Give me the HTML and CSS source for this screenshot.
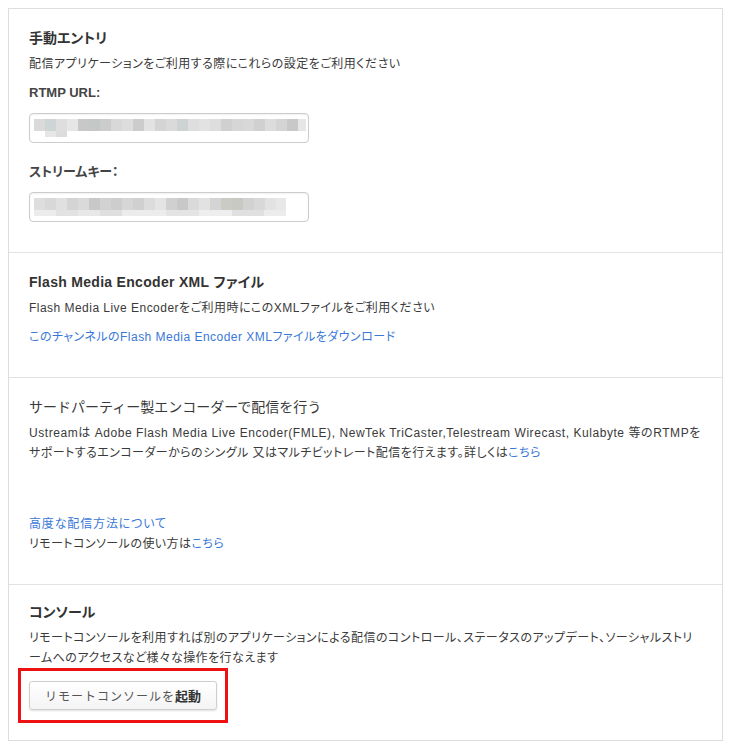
FILE: index.html
```html
<!DOCTYPE html>
<html lang="ja">
<head>
<meta charset="utf-8">
<title>配信設定</title>
<link rel="stylesheet" href="styles.css">
</head>
<body>
<div class="card">
  <section class="sec">
    <h2 class="title">手動エントリ</h2>
    <p class="desc">配信アプリケーションをご利用する際にこれらの設定をご利用ください</p>
    <div class="label">RTMP URL:</div>
    <div class="field"><div class="mosaic mosaic-url"></div></div>
    <div class="label">ストリームキー：</div>
    <div class="field field-last"><div class="mosaic mosaic-key"></div></div>
  </section>
  <section class="sec">
    <h2 class="title title-wide">Flash Media Encoder XML ファイル</h2>
    <p class="desc">Flash Media Live Encoderをご利用時にこのXMLファイルをご利用ください</p>
    <p class="desc desc-link"><a class="link" href="#">このチャンネルのFlash Media Encoder XMLファイルをダウンロード</a></p>
  </section>
  <section class="sec">
    <h2 class="title title-light">サードパーティー製エンコーダーで配信を行う</h2>
    <p class="desc lines loose"><span class="line-wide">Ustreamは Adobe Flash Media Live Encoder(FMLE), NewTek TriCaster,Telestream Wirecast, Kulabyte 等のRTMPを</span><br>サポートするエンコーダーからのシングル 又はマルチビットレート配信を行えます。詳しくは<a class="link" href="#">こちら</a></p>
    <p class="desc lines loose more"><a class="link link-wide" href="#">高度な配信方法について</a><br>リモートコンソールの使い方は<a class="link" href="#">こちら</a></p>
  </section>
  <section class="sec sec-last">
    <h2 class="title">コンソール</h2>
    <p class="desc lines">リモートコンソールを利用すれば別のアプリケーションによる配信のコントロール、ステータスのアップデート、ソーシャルストリ<br>ームへのアクセスなど様々な操作を行なえます</p>
    <div class="highlight">
      <button class="btn" type="button">リモートコンソールを<b class="btn-strong">起動</b></button>
    </div>
  </section>
</div>
</body>
</html>
```
FILE: styles.css
```css
html, body {
  background: #ffffff;
}
body {
  margin: 8px 7px 8px 8px;
  font-family: "Liberation Sans", "Noto Sans CJK JP", sans-serif;
  color: #333333;
  font-size: 12px;
}
.card {
  border: 1px solid #dddddd;
}
.sec {
  padding: 20px 21px 30px 20px;
  border-bottom: 1px solid #e2e2e2;
}
.sec-last {
  border-bottom: none;
  padding-top: 18px;
  padding-bottom: 17px;
}
.title {
  margin: 0 0 7px 0;
  font-size: 14px;
  line-height: 18px;
  font-weight: bold;
  color: #333333;
  font-feature-settings: "palt";
}
.title-wide {
  letter-spacing: 0.3px;
}
.title-light {
  font-weight: normal;
  font-size: 14px;
  font-feature-settings: normal;
  color: #3a3a3a;
}
.desc {
  margin: 0;
  font-size: 12px;
  line-height: 20px;
  color: #3a3a3a;
  font-feature-settings: "palt";
  letter-spacing: 0.47px;
}
.desc-link {
  margin-top: 9px;
}
.lines {
  white-space: nowrap;
}
.loose {
  letter-spacing: 0.45px;
}
.line-wide {
  letter-spacing: 0.56px;
}
.link-wide {
  letter-spacing: 0.85px;
}
.more {
  margin-top: 51px;
}
.link {
  color: #3a78d8;
  text-decoration: none;
}
.label {
  margin: 9px 0 10px 0;
  font-size: 13px;
  line-height: 20px;
  font-weight: bold;
  color: #444444;
  font-feature-settings: "palt";
}
.field {
  box-sizing: border-box;
  width: 280px;
  height: 30px;
  border: 1px solid #cccccc;
  border-radius: 4px;
  box-shadow: inset 0 1px 2px rgba(0, 0, 0, 0.06);
  margin-bottom: 19px;
  display: flex;
  align-items: center;
  padding-left: 4px;
}
.field-last {
  margin-bottom: 0;
}
.mosaic {
  height: 18px;
}
.mosaic-url {
  width: 272px;
  background:
    linear-gradient(90deg,
      transparent 0 11px, #e6e6e6 11px 22px, #dcdcdc 22px 33px, transparent 33px 100%) 0 12px / 272px 6px no-repeat,
    linear-gradient(90deg,
      #dadada 0 11px, #cfd4d4 11px 22px, #dedede 22px 33px, #e6e6e6 33px 44px,
      #c8c8c8 44px 55px, #c4c8c8 55px 66px, #cccccc 66px 77px, #d8d8d8 77px 88px,
      #dddddd 88px 99px, #cccccc 99px 110px, #e2e2e2 110px 121px, #d4d4d4 121px 132px,
      #dadada 132px 143px, #cdd3d3 143px 154px, #dedede 154px 165px, #e2e2e2 165px 176px,
      #dddddd 176px 187px, #d0d0d0 187px 198px, #d6d6d6 198px 209px, #d8d8d8 209px 220px,
      #d0d0d0 220px 231px, #dcdcdc 231px 242px, #d4d4d4 242px 253px, #c8c8c8 253px 264px,
      #e6e6e6 264px 272px) 0 0 / 272px 12px no-repeat;
}
.mosaic-key {
  width: 252px;
  background:
    linear-gradient(90deg,
      #ececec 0 22px, #e2e2e2 22px 44px, #e8e8e8 44px 66px, #dfdfdf 66px 88px,
      #ececec 88px 132px, #e4e4e4 132px 165px, #eeeeee 165px 198px, #e0e0e0 198px 230px, #ececec 230px 252px) 0 12px / 252px 6px no-repeat,
    linear-gradient(90deg,
      #dedede 0 11px, #d8d8d8 11px 22px, #e0e0e0 22px 33px, #d4d4d4 33px 44px,
      #dadada 44px 55px, #c8c8c8 55px 66px, #d2d2d2 66px 77px, #cdcdcd 77px 88px,
      #d6d6d6 88px 99px, #d0d0d0 99px 110px, #dcdcdc 110px 121px, #e4e4e4 121px 132px,
      #d0d0d0 132px 143px, #c8c8c8 143px 154px, #dadada 154px 165px, #e2e2e2 165px 176px,
      #d4d4d4 176px 187px, #cbcbc6 187px 198px, #c9c9c4 198px 209px, #d2d2d0 209px 220px,
      #d8d8d8 220px 231px, #e2e2e2 231px 242px, #e8e8e8 242px 252px) 0 0 / 252px 12px no-repeat;
}
.highlight {
  display: flex;
  width: max-content;
  margin-left: -11px;
  border: 3px solid #ee1111;
  padding: 10px 8px 10px 8px;
}
.btn {
  display: block;
  width: 188px;
  height: 29px;
  border: 1px solid #cfcfcf;
  border-radius: 3px;
  background: linear-gradient(#ffffff, #f4f4f4);
  box-shadow: 0 1px 2px rgba(0, 0, 0, 0.12);
  font-family: "Liberation Sans", "Noto Sans CJK JP", sans-serif;
  font-size: 12px;
  color: #555555;
  letter-spacing: 1px;
  padding: 0;
  text-align: center;
}
.btn-strong {
  font-weight: bold;
  color: #333333;
  font-size: 13px;
  letter-spacing: 0;
}
```
